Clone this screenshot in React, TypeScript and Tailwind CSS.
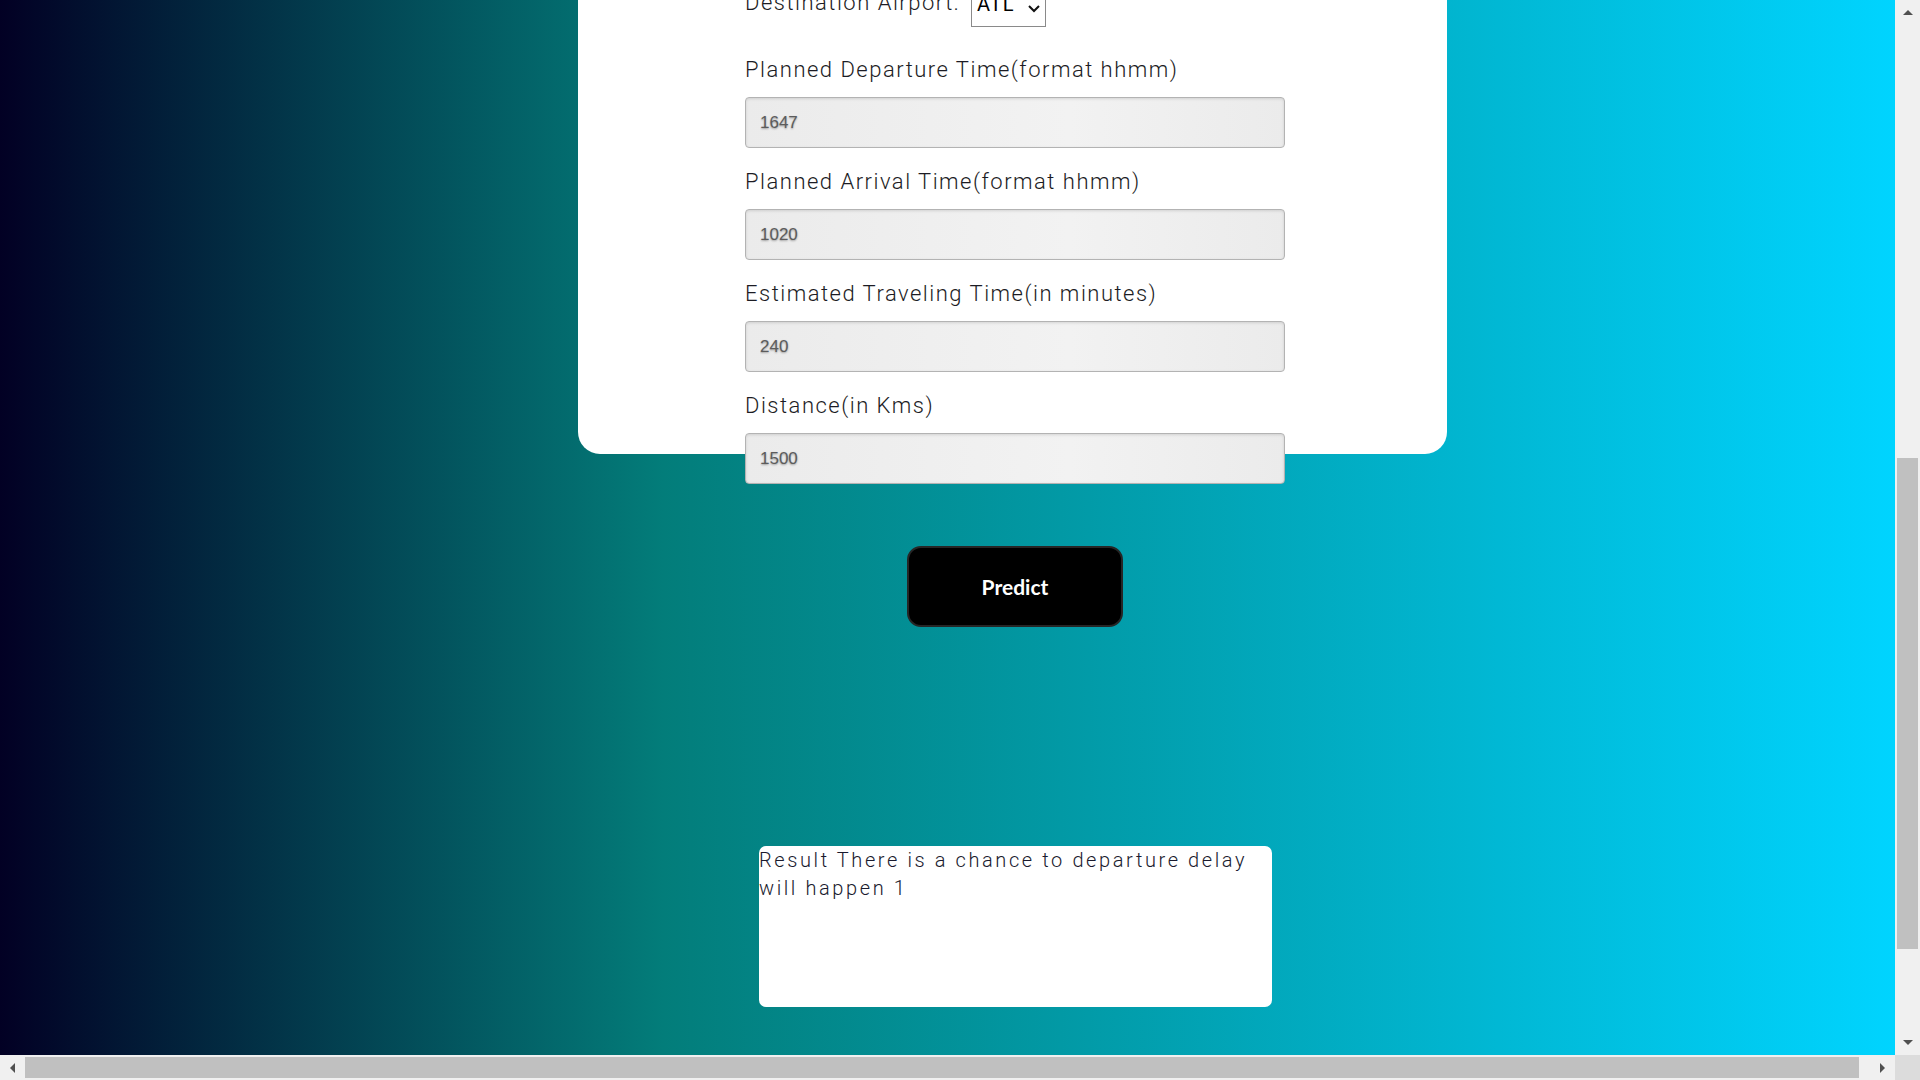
import React from "react";

const fields = [
  { label: "Planned Departure Time(format hhmm)", value: "1647" },
  { label: "Planned Arrival Time(format hhmm)", value: "1020" },
  { label: "Estimated Traveling Time(in minutes)", value: "240" },
  { label: "Distance(in Kms)", value: "1500" },
];

function Arrow({ dir }: { dir: "up" | "down" | "left" | "right" }) {
  const points = {
    up: "0,5 5,0 10,5",
    down: "0,0 10,0 5,5",
    left: "5,0 5,10 0,5",
    right: "0,0 5,5 0,10",
  }[dir];
  const vertical = dir === "up" || dir === "down";
  return (
    <svg width={vertical ? 10 : 5} height={vertical ? 5 : 10} viewBox={vertical ? "0 0 10 5" : "0 0 5 10"}>
      <polygon points={points} fill="#505050" />
    </svg>
  );
}

function Field({ label, value }: { label: string; value: string }) {
  return (
    <div className="flex flex-col">
      <label className="h-[28px] pt-[1px] text-[22px] leading-[28px] font-light tracking-[1.5px] text-[#1c1c24] [font-family:Roboto,sans-serif]">
        {label}
      </label>
      <input
        readOnly
        value={value}
        className="mt-[14px] mb-[19px] h-[51px] w-[540px] rounded-[4px] border border-[#b3b3b3] bg-[linear-gradient(90deg,#ebebeb,#f2f2f2_60%,#ebebeb)] px-[14px] text-[17px] text-[#5c5c5c] shadow-[inset_0_1px_3px_rgba(0,0,0,0.12)] [text-shadow:0_1px_2px_rgba(0,0,0,0.35)] [font-family:'Liberation_Sans',Arial,sans-serif] outline-none"
      />
    </div>
  );
}

export default function App() {
  return (
    <div className="flex h-screen w-screen flex-col overflow-hidden">
      <div className="flex min-h-0 flex-1">
        <main className="flex min-w-0 flex-1 flex-col overflow-hidden bg-[linear-gradient(90deg,#020024_0%,#037d7a_35%,#00d4ff_100%)] pl-[578px]">
          <section className="-mt-[30px] h-[484px] w-[869px] shrink-0 rounded-[22px] bg-white pl-[167px]">
            <div className="flex h-[57px] items-end gap-[11px]">
              <span className="pb-[10px] text-[22px] leading-[28px] font-light tracking-[1.5px] text-[#1c1c24] [font-family:Roboto,sans-serif]">
                Destination Airport:
              </span>
              <div className="flex h-[57px] w-[75px] items-end justify-between border border-[#8a8a8a] bg-white px-[5px] pb-[10px]">
                <span className="text-[20px] leading-[24px] tracking-[1px] text-black [font-family:Roboto,sans-serif]">ATL</span>
                <svg width="12" height="8" viewBox="0 0 12 8" className="mb-[3px]">
                  <polyline points="1,1 6,6 11,1" fill="none" stroke="#111" strokeWidth="2" />
                </svg>
              </div>
            </div>
            <div className="mt-[28px] flex flex-col">
              {fields.map((f) => (
                <Field key={f.label} label={f.label} value={f.value} />
              ))}
            </div>
          </section>

          <button
            type="button"
            className="mt-[92px] ml-[329px] h-[81px] w-[216px] shrink-0 rounded-[14px] border-2 border-[#262626] bg-black text-[21px] font-bold text-white [font-family:Lato,sans-serif]"
          >
            Predict
          </button>

          <div className="mt-[219px] ml-[181px] h-[161px] w-[513px] shrink-0 rounded-[7px] bg-white text-[20px] leading-[28px] font-light tracking-[2.6px] text-[#1a1a2e] [font-family:Roboto,sans-serif]">
            Result There is a chance to departure delay will happen 1
          </div>
        </main>

        <aside className="flex w-[25px] flex-col bg-[#f0f0f0]">
          <div className="flex h-[25px] items-center justify-center">
            <Arrow dir="up" />
          </div>
          <div className="flex-1 pt-[433px]">
            <div className="ml-[2px] h-[491px] w-[21px] bg-[#c0c0c0]" />
          </div>
          <div className="flex h-[25px] items-center justify-center">
            <Arrow dir="down" />
          </div>
        </aside>
      </div>

      <div className="flex h-[25px] bg-[#f0f0f0]">
        <div className="flex w-[25px] items-center justify-center">
          <Arrow dir="left" />
        </div>
        <div className="flex-1 pt-[2px]">
          <div className="h-[21px] w-[1834px] bg-[#c0c0c0]" />
        </div>
        <div className="flex w-[25px] items-center justify-center">
          <Arrow dir="right" />
        </div>
        <div className="w-[25px] bg-[#dcdcdc]" />
      </div>
    </div>
  );
}
